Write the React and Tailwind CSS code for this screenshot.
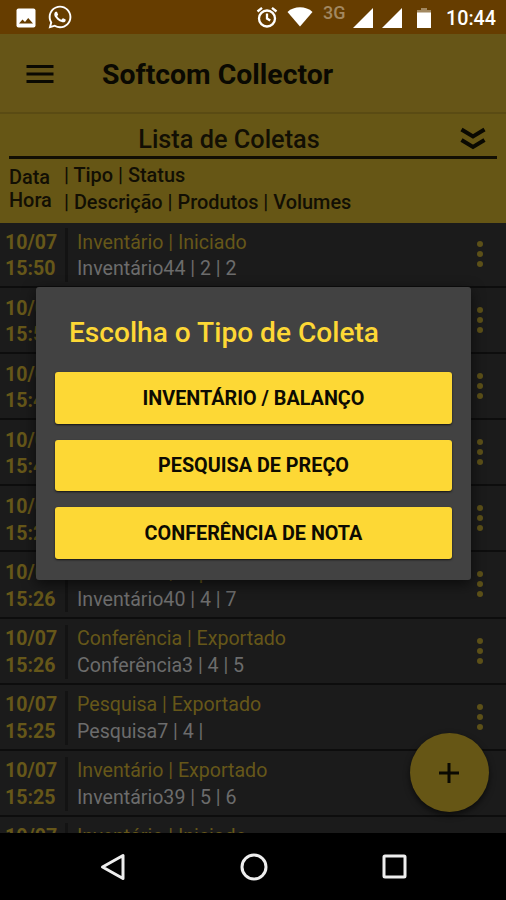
import { MdMenu } from 'react-icons/md'
import { FaWhatsapp } from 'react-icons/fa'

const rows = [
  { date: '10/07', time: '15:50', title: 'Inventário | Iniciado', detail: 'Inventário44 | 2 | 2' },
  { date: '10/07', time: '15:50' },
  { date: '10/07', time: '15:41' },
  { date: '10/07', time: '15:41' },
  { date: '10/07', time: '15:27' },
  { date: '10/07', time: '15:26', title: 'Inventário | Exportado', detail: 'Inventário40 | 4 | 7' },
  { date: '10/07', time: '15:26', title: 'Conferência | Exportado', detail: 'Conferência3 | 4 | 5' },
  { date: '10/07', time: '15:25', title: 'Pesquisa | Exportado', detail: 'Pesquisa7 | 4 |' },
  { date: '10/07', time: '15:25', title: 'Inventário | Exportado', detail: 'Inventário39 | 5 | 6', noMenu: true },
  { date: '10/07', title: 'Inventário | Iniciado', noMenu: true },
]

const options = ['INVENTÁRIO / BALANÇO', 'PESQUISA DE PREÇO', 'CONFERÊNCIA DE NOTA']

function StatusBar() {
  return (
    <div className="h-[34px] shrink-0 bg-[#663d00] flex items-center justify-between pl-[16px] pr-[10px] text-white">
      <div className="flex items-center gap-[11px]">
        <svg className="mt-[1px]" width="20" height="20" viewBox="0 0 20 20">
          <rect x="0.5" y="0.5" width="19" height="19" rx="2" fill="#fff" />
          <path d="M3 15.5l3.500-4 2.500 2.500 3.200-4L17 15.500z" fill="#663d00" />
        </svg>
        <FaWhatsapp size={26} />
      </div>
      <div className="flex items-center">
        <svg width="22" height="22" viewBox="0 0 22 22" fill="none" stroke="#fff" strokeWidth="2.3">
          <circle cx="11" cy="12.5" r="8" />
          <path d="M11 7.500v5l3.200 2M1.500 5.500L6 1.800M20.500 5.500L16 1.800" />
        </svg>
        <svg className="ml-[9px]" width="26" height="20" viewBox="0 0 26 20">
          <path d="M0.500 5C7-1.200 19-1.200 25.500 5L13 19.500z" fill="#fff" />
        </svg>
        <span className="ml-[10px] mb-[9px] w-[23px] text-[18px] leading-none font-medium text-[#a28860]">3G</span>
        <svg className="ml-[7px] mt-[2px]" width="20" height="20" viewBox="0 0 20 20">
          <path d="M20 0v20H0z" fill="#fff" />
        </svg>
        <svg className="ml-[9px] mt-[2px]" width="20" height="20" viewBox="0 0 20 20">
          <path d="M20 0v20H0z" fill="#fff" />
        </svg>
        <svg className="ml-[15px] mt-[2px]" width="14" height="20" viewBox="0 0 14 20">
          <path d="M4 0h6v2h4v3H0V2h4z" fill="#a28860" />
          <path d="M0 4.500h14V20H0z" fill="#fff" />
        </svg>
        <span className="ml-[15px] mt-[3px] text-[19.700px] leading-none font-medium">10:44</span>
      </div>
    </div>
  )
}

function AppBar() {
  return (
    <div className="h-[80px] shrink-0 bg-[#665517] border-b-2 border-[#5a4b13] flex items-center pl-[22px] text-[#0a0902]">
      <MdMenu size={36} className="mt-[1px]" />
      <h1 className="ml-[44px] pt-[5px] text-[28.400px] leading-none font-bold">Softcom Collector</h1>
    </div>
  )
}

function ListHeader() {
  return (
    <div className="h-[109px] shrink-0 bg-[#665615] px-[9px] pt-[9px] text-[#120f04]">
      <div className="h-[36px] border-b-[3px] border-[#120f04] flex items-center">
        <h2 className="flex-1 pr-[11px] pt-[1px] text-center text-[25.300px] leading-none font-medium">Lista de Coletas</h2>
        <svg className="mr-[11px] mb-[2px]" width="26" height="24" viewBox="0 0 26 24" fill="none" stroke="#0a0902" strokeWidth="4">
          <path d="M1.500 2.500L13 9.500l11.500-7M1.500 13L13 20l11.500-7" />
        </svg>
      </div>
      <div className="flex pt-[4px] text-[19.900px] font-medium">
        <div className="w-[55px] pt-[3px] leading-[23px]">
          <div>Data</div>
          <div>Hora</div>
        </div>
        <div className="-mt-[1px] leading-[27px]">
          <div>| Tipo | Status</div>
          <div>| Descrição | Produtos | Volumes</div>
        </div>
      </div>
    </div>
  )
}

function Row({ row }) {
  return (
    <div className="h-[66.1px] shrink-0 border-b-[2px] border-[#0d0d0d] flex items-start pt-[7px]">
      <div className="w-[65px] shrink-0 pl-[5px] pt-[0.6px] text-[19.600px] leading-[26.600px] font-bold text-[#665719]">
        <div>{row.date}</div>
        <div>{row.time}</div>
      </div>
      <div className="w-[3px] h-[54px] -mt-[1px] bg-[#131313]" />
      <div className="flex-1 pl-[9px] pt-[0.6px] text-[19.600px] leading-[26.600px]">
        <div className="text-[#665719]">{row.title}</div>
        <div className="text-[#6c6c6c]">{row.detail}</div>
      </div>
      {!row.noMenu && (
        <div className="w-[6px] mr-[23px] mt-[12px] flex flex-col gap-[4px]">
          <div className="size-[6px] rounded-full bg-[#5c5018]" />
          <div className="size-[6px] rounded-full bg-[#5c5018]" />
          <div className="size-[6px] rounded-full bg-[#5c5018]" />
        </div>
      )}
    </div>
  )
}

function TypeDialog() {
  return (
    <div className="absolute left-[36px] top-[287px] w-[435px] h-[293px] rounded-[3px] bg-[#424242] px-[19px] shadow-[0_4px_14px_rgba(0,0,0,0.6)]">
      <h3 className="pl-[14px] pt-[30px] h-[85px] text-[28.100px] leading-[32px] font-medium text-[#fdd835]">
        Escolha o Tipo de Coleta
      </h3>
      <div className="flex flex-col gap-[16px]">
        {options.map(label => (
          <button
            key={label}
            className="h-[51.500px] pt-[1.500px] rounded-[3px] bg-[#fdd835] text-[19.800px] leading-none font-bold text-[#0d0b02] shadow-[0_1px_2px_rgba(0,0,0,0.7)]"
          >
            {label}
          </button>
        ))}
      </div>
    </div>
  )
}

function NavBar() {
  return (
    <div className="h-[67px] shrink-0 bg-black flex items-center">
      <svg className="ml-[100px]" width="26" height="28" viewBox="0 0 26 28" fill="none" stroke="#eee" strokeWidth="3">
        <path d="M2.500 14L23 2.500v23z" strokeLinejoin="round" />
      </svg>
      <svg className="ml-[114px]" width="28" height="28" viewBox="0 0 28 28" fill="none" stroke="#eee" strokeWidth="3">
        <circle cx="14" cy="14" r="12" />
      </svg>
      <svg className="ml-[114px]" width="25" height="25" viewBox="0 0 25 25" fill="none" stroke="#eee" strokeWidth="3">
        <rect x="2" y="2" width="21" height="21" rx="1" />
      </svg>
    </div>
  )
}

export default function App() {
  return (
    <div className="relative w-[506px] h-[900px] overflow-hidden flex flex-col bg-[#1b1b1b] font-['Roboto',sans-serif]">
      <StatusBar />
      <AppBar />
      <ListHeader />
      <div className="flex-1 min-h-0 overflow-hidden flex flex-col">
        <div className="-mt-[1px] flex flex-col">
          {rows.map((row, i) => <Row key={i} row={row} />)}
        </div>
      </div>
      <NavBar />

      <button className="absolute left-[410px] top-[733px] size-[79px] rounded-full bg-[#665615] flex items-center justify-center shadow-[0_3px_6px_rgba(0,0,0,0.6)]">
        <svg className="mr-[1px]" width="20" height="20" viewBox="0 0 20 20" stroke="#0a0902" strokeWidth="3">
          <path d="M10 0v20M0 10h20" />
        </svg>
      </button>
      <TypeDialog />
    </div>
  )
}
